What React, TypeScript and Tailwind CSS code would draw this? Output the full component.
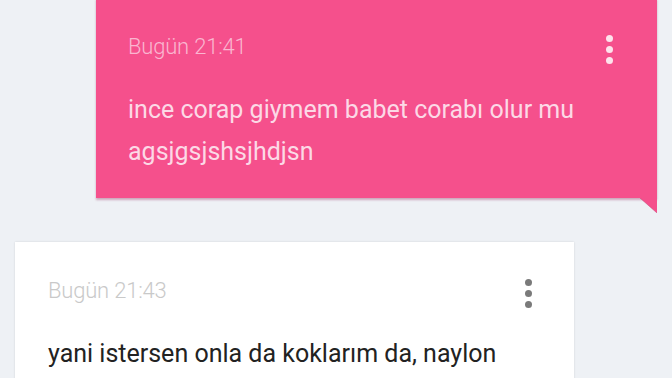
import React from "react";

function Dots({ color }: { color: string }) {
  return (
    <div className="flex flex-col items-center gap-[4px] pt-[1px]">
      <span className={`block w-[7px] h-[7px] rounded-full ${color}`} />
      <span className={`block w-[7px] h-[7px] rounded-full ${color}`} />
      <span className={`block w-[7px] h-[7px] rounded-full ${color}`} />
    </div>
  );
}

export default function App() {
  return (
    <div
      className="w-[672px] h-[378px] overflow-hidden bg-[#eef1f5] flex flex-col"
      style={{ fontFamily: "Roboto, 'Noto Sans', sans-serif" }}
    >
      <div className="relative ml-[96px] mt-[-2px] w-[561px] bg-[#f5508c] shadow-[0_2px_2px_rgba(150,30,80,0.35)] pl-[32px] pr-[44px] pt-[30px] pb-[25px]">
        <div className="flex items-start justify-between h-[38px]">
          <span className="text-[22px] leading-[38px] font-light text-[#fab6d0] tracking-[-0.2px]">
            Bugün 21:41
          </span>
          <div className="pt-[6px]">
            <Dots color="bg-[#fde3ec]" />
          </div>
        </div>
        <p className="mt-[23px] text-[25px] leading-[42px] text-[#fcd9e6] font-normal">
          ince corap giymem babet corabı olur mu
          <br />
          agsjgsjshsjhdjsn
        </p>
        <svg
          className="absolute right-0 bottom-[-15px]"
          width="17"
          height="15"
          viewBox="0 0 17 15"
        >
          <path d="M0 0 L17 0 L17 15 Z" fill="#f5508c" />
          <path d="M0 0 L17 15" stroke="#c84577" strokeWidth="1" opacity="0.5" />
        </svg>
      </div>

      <div className="ml-[15px] mt-[44px] w-[559px] bg-white shadow-[0_0_2px_rgba(0,0,0,0.12)] pl-[33px] pr-[42px] pt-[30px] pb-[25px]">
        <div className="flex items-start justify-between h-[38px]">
          <span className="text-[22px] leading-[38px] font-light text-[#c9c9c9] tracking-[-0.2px]">
            Bugün 21:43
          </span>
          <div className="pt-[6px]">
            <Dots color="bg-[#7a7a7a]" />
          </div>
        </div>
        <p className="mt-[23px] text-[25px] leading-[42px] text-[#222222] font-normal">
          yani istersen onla da koklarım da, naylon
        </p>
      </div>
    </div>
  );
}
